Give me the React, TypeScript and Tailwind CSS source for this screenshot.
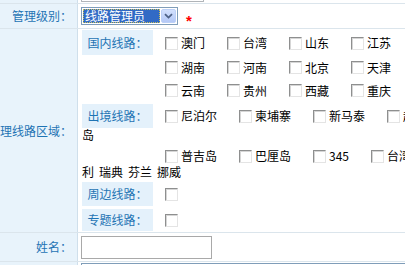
import React from "react";

const CB = () => (
  <span className="inline-block w-[13px] h-[13px] shrink-0 bg-white border border-t-[#8e8f8f] border-l-[#8e8f8f] border-r-[#e4e4e4] border-b-[#e4e4e4] shadow-[inset_1px_1px_0_#d6d6d6]" />
);

const Item = ({ label }: { label: string }) => (
  <span className="flex items-center shrink-0 mr-[22px] whitespace-nowrap">
    <CB />
    <span className="ml-[3px]">{label}</span>
  </span>
);

const SubLabel = ({ children, h }: { children: React.ReactNode; h: string }) => (
  <div
    className={`w-[71px] shrink-0 bg-[#e4f1fb] text-[#1f74b4] flex items-center justify-center whitespace-nowrap ${h}`}
  >
    {children}
  </div>
);

const Row = ({
  label,
  children,
  cls,
}: {
  label?: string;
  children: React.ReactNode;
  cls?: string;
}) => (
  <div className={`flex border-b border-[#dbe5ec] ${cls ?? ""}`}>
    <div className="w-[78px] shrink-0 bg-[#e8f3fb] border-r border-[#cfdfeb] flex items-center justify-end pr-[5px] whitespace-nowrap text-[#1f74b4]">
      {label}
    </div>
    <div className="flex-1 min-w-0 bg-white">{children}</div>
  </div>
);

export default function App() {
  return (
    <div className="w-[405px] h-[265px] overflow-hidden bg-white text-[12px] leading-[14px] text-black font-['Noto_Sans_CJK_SC','Liberation_Sans',sans-serif]">
      {/* Row 0 (partial) */}
      <Row cls="h-[4px]">
        <div className="ml-[3px] w-[123px] h-[2px] border-x border-b border-[#b0b4b8] rounded-b-[1px]" />
      </Row>

      {/* Row 1 */}
      <Row label="管理级别：" cls="h-[25px]">
        <div className="h-full flex items-center pl-[3px]">
          <div className="w-[97px] h-[18px] border border-[#7f9db9] bg-white flex items-center p-[1px]">
            <div className="w-[79px] h-[14px] bg-[#316ac5] outline-1 outline-dotted outline-[#c9c05a] -outline-offset-1 text-white flex items-center pl-[2px] whitespace-nowrap">
              线路管理员
            </div>
            <div className="w-[15px] h-[14px] ml-[1px] rounded-[2px] bg-gradient-to-b from-[#d2e0fd] to-[#b4c8f6] border border-[#bcd0f7] flex items-center justify-center">
              <svg width="9" height="6" viewBox="0 0 9 6">
                <path d="M1 1.2 L4.5 4.6 L8 1.2" fill="none" stroke="#4d6185" strokeWidth="1.8" />
              </svg>
            </div>
          </div>
          <span className="ml-[8px] mt-[9px] text-[15px] leading-[15px] font-bold text-[#ff0000] font-['Liberation_Sans',sans-serif]">*</span>
        </div>
      </Row>

      {/* Row 2 */}
      <Row label="管理线路区域：" cls="h-[204px]">
        <div className="pl-[4px] pt-[1px] pb-[1px] flex flex-col">
          {/* 国内 */}
          <div className="flex">
            <SubLabel h="h-[25px]">国内线路：</SubLabel>
            <div className="ml-[12px] flex flex-col">
              <div className="h-[26px] flex items-center">
                <Item label="澳门" />
                <Item label="台湾" />
                <Item label="山东" />
                <Item label="江苏" />
              </div>
              <div className="h-[23px] flex items-center">
                <Item label="湖南" />
                <Item label="河南" />
                <Item label="北京" />
                <Item label="天津" />
              </div>
              <div className="h-[23px] flex items-center">
                <Item label="云南" />
                <Item label="贵州" />
                <Item label="西藏" />
                <Item label="重庆" />
              </div>
            </div>
          </div>

          {/* 出境 */}
          <div className="mt-[2px] flex">
            <SubLabel h="h-[24px]">出境线路：</SubLabel>
            <div className="ml-[12px] h-[24px] flex items-center">
              <Item label="尼泊尔" />
              <Item label="柬埔寨" />
              <Item label="新马泰" />
              <Item label="越南" />
            </div>
          </div>
          <div className="h-[14px] flex items-center">岛</div>
          <div className="mt-[4px] h-[20px] flex items-center pl-[83px]">
            <Item label="普吉岛" />
            <Item label="巴厘岛" />
            <Item label="345" />
            <Item label="台湾" />
          </div>
          <div className="h-[12px] flex items-center whitespace-nowrap">
            <span>利</span>
            <span className="ml-[5px]">瑞典</span>
            <span className="ml-[5px]">芬兰</span>
            <span className="ml-[5px]">挪威</span>
          </div>

          {/* 周边 */}
          <div className="mt-[4px] flex">
            <SubLabel h="h-[24px]">周边线路：</SubLabel>
            <div className="ml-[12px] h-[24px] flex items-center">
              <CB />
            </div>
          </div>

          {/* 专题 */}
          <div className="mt-[3px] flex">
            <SubLabel h="h-[22px]">专题线路：</SubLabel>
            <div className="ml-[12px] h-[22px] flex items-center">
              <CB />
            </div>
          </div>
        </div>
      </Row>

      {/* Row 3 */}
      <Row label="姓名：" cls="h-[29px]">
        <div className="pl-[3px] pt-[3px]">
          <div className="w-[131px] h-[23px] border border-[#a9a9a9] bg-white" />
        </div>
      </Row>

      {/* Row 4 (partial) */}
      <Row cls="h-[10px] border-b-0">
        <div className="pl-[3px] pt-[1px]">
          <div className="h-[8px] border-t border-l border-[#7f9db9]" />
        </div>
      </Row>
    </div>
  );
}
